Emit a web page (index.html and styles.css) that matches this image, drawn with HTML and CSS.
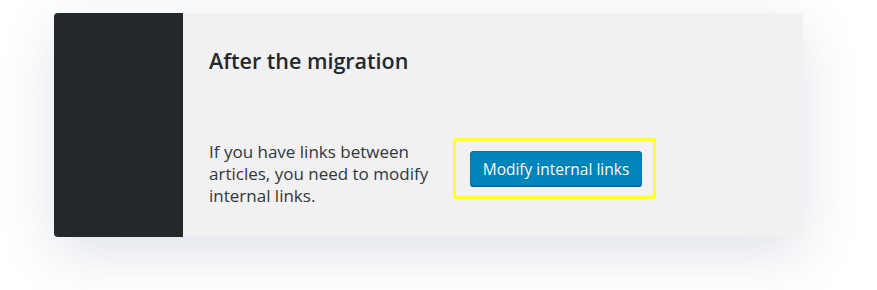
FILE: index.html
```html
<!DOCTYPE html>
<html lang="en">
<head>
    <meta charset="UTF-8">
    <meta name="viewport" content="width=device-width, initial-scale=1.0">
    <title>After the migration</title>
    <link rel="stylesheet" href="styles.css">
</head>
<body>
    <div class="page">
        <div class="card">
            <div class="sidebar"></div>
            <div class="content">
                <h2 class="title">After the migration</h2>
                <div class="row">
                    <p class="info">If you have links between articles, you need to modify internal links.</p>
                    <div class="highlight">
                        <button class="button-primary">Modify internal links</button>
                    </div>
                </div>
            </div>
        </div>
    </div>
</body>
</html>
```

FILE: styles.css
```css
body {
    margin: 0;
    background: #fff;
    font-family: "Open Sans", "Noto Sans", sans-serif;
    color: #23282d;
}
.page {
    height: 290px;
    box-sizing: border-box;
    padding: 13px 74px 0 54px;
}
.card {
    display: flex;
    height: 224px;
    background-color: #f1f1f1;
    border-radius: 4px;
    overflow: hidden;
    box-shadow: 0 16px 56px rgba(50, 75, 110, 0.16);
}
.sidebar {
    width: 129px;
    background-color: #23282d;
}
.content {
    flex: 1;
    padding: 33px 26px 0 26px;
}
.title {
    margin: 0;
    font-size: 21.5px;
    font-weight: 600;
    line-height: 30px;
}
.row {
    display: flex;
    align-items: flex-start;
    margin-top: 65px;
}
.info {
    width: 236px;
    margin: 0 8px 0 0;
    font-size: 17px;
    font-weight: 500;
    line-height: 22px;
    color: #32373c;
}
.highlight {
    border: 3px solid #ffff33;
    border-radius: 3px;
    padding: 10px 11px 10px 14px;
    margin-top: -3px;
}
.button-primary {
    display: block;
    width: 172px;
    height: 35px;
    padding: 0;
    font-family: "Open Sans", "Noto Sans", sans-serif;
    font-size: 15.5px;
    font-weight: 500;
    color: #fff;
    background-color: #0085ba;
    border: 1px solid #0073aa;
    border-radius: 3px;
    box-shadow: 0 1px 0 #006799;
    text-shadow: 0 -1px 1px #006799;
}
```
